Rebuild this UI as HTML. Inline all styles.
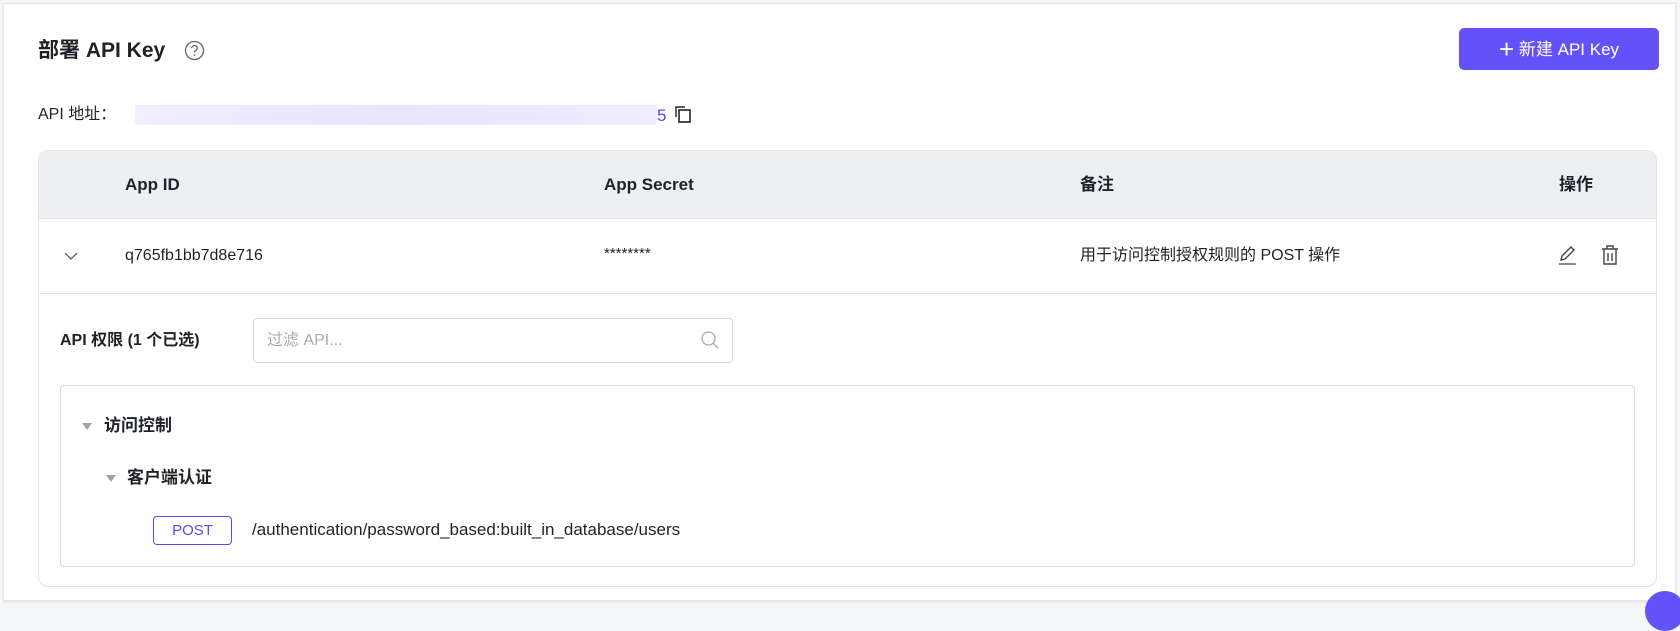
<!DOCTYPE html>
<html><head><meta charset="utf-8"><style>
*{box-sizing:border-box;margin:0;padding:0}
body{width:1680px;height:604px;background:#f5f6f8;font-family:"Liberation Sans","Noto Sans CJK SC",sans-serif;color:#1f2229;position:relative;overflow:hidden;line-height:20px}
.card{position:absolute;left:3px;top:3px;width:1673px;height:598px;background:#fff;border:1px solid #e4e5e8;box-shadow:0 1px 3px rgba(0,0,0,.08)}
.abs{position:absolute}
.title{left:34px;top:32px;font-size:21px;font-weight:bold;line-height:30px}
.btn{left:1455px;top:24px;width:200px;height:42px;background:#6352f8;border-radius:5px;color:#fff;font-size:17px;line-height:42px;text-align:center}
.tbl{left:34px;top:146px;width:1619px;height:437px;border:1px solid #e2e4e9;border-radius:10px;overflow:hidden}
.hd{position:absolute;left:0;top:0;width:100%;height:68px;background:#eeeff3;border-bottom:1px solid #e2e4e9}
.th{position:absolute;top:24px;font-size:17px;font-weight:bold;line-height:20px}
.td{position:absolute;font-size:16px;line-height:20px}
.row{position:absolute;left:0;top:68px;width:100%;height:75px;border-bottom:1px solid #e2e4e9}
</style></head><body>
<div class="card">
 <div class="abs title">部署 API Key</div>
 <svg class="abs" style="left:180px;top:36px" width="21" height="21" viewBox="0 0 21 21"><circle cx="10.5" cy="10.5" r="9" fill="none" stroke="#666" stroke-width="1.3"/><path d="M7.8 8.2a2.7 2.7 0 1 1 3.8 2.4c-.8.4-1.1.9-1.1 1.8" fill="none" stroke="#666" stroke-width="1.3"/><circle cx="10.5" cy="15" r=".9" fill="#666"/></svg>
 <div class="abs btn"><span style="font-size:26px;font-weight:200;vertical-align:-3px">+</span>&nbsp;新建 API Key</div>
 <div class="abs" style="left:34px;top:101px;font-size:16px">API 地址：</div>
 <div class="abs" style="left:131px;top:101px;width:522px;height:20px;background:linear-gradient(90deg,#f0eeff,#e8e5ff 50%,#efedff);"></div>
 <div class="abs" style="left:653px;top:102px;font-size:17px;color:#5a48f0">5</div>
 <svg class="abs" style="left:670px;top:101px" width="20" height="20" viewBox="0 0 20 20"><rect x="5" y="5" width="11" height="12" fill="none" stroke="#222" stroke-width="1.6"/><path d="M2 12V2h9" fill="none" stroke="#222" stroke-width="1.4"/></svg>
 <div class="abs tbl">
  <div class="hd">
   <div class="th" style="left:86px">App ID</div>
   <div class="th" style="left:565px">App Secret</div>
   <div class="th" style="left:1041px">备注</div>
   <div class="th" style="left:1520px">操作</div>
  </div>
  <div class="row">
   <svg class="abs" style="left:25px;top:32px" width="14" height="10"><path d="M1 2l6 6 6-6" fill="none" stroke="#555" stroke-width="1.2"/></svg>
   <div class="td" style="left:86px;top:27px">q765fb1bb7d8e716</div>
   <div class="td" style="left:565px;top:25px;font-size:15px">********</div>
   <div class="td" style="left:1041px;top:27px">用于访问控制授权规则的 POST 操作</div>
   <svg class="abs" style="left:1518px;top:25px" width="22" height="22" viewBox="0 0 22 22"><path d="M4 16l1-4 9-9 3 3-9 9z" fill="none" stroke="#444" stroke-width="1.4"/><path d="M2 20h17" stroke="#666" stroke-width="1.6"/></svg>
   <svg class="abs" style="left:1561px;top:25px" width="20" height="22" viewBox="0 0 20 22"><path d="M2 5h16M7 5V2h6v3M4 5v15h12V5M8 9v8M12 9v8" fill="none" stroke="#444" stroke-width="1.4"/></svg>
  </div>
  <div class="td" style="left:21px;top:180px;font-weight:bold">API 权限 (1 个已选)</div>
  <div class="abs" style="left:214px;top:167px;width:480px;height:45px;border:1px solid #d5d7de;border-radius:4px">
   <div class="abs" style="left:13px;top:12px;font-size:16px;color:#a8abb3">过滤 API...</div>
   <svg class="abs" style="left:446px;top:11px" width="20" height="20" viewBox="0 0 20 20"><circle cx="8.5" cy="8.5" r="6.5" fill="none" stroke="#aaa" stroke-width="1.3"/><path d="M13 13l5 5" stroke="#aaa" stroke-width="1.3"/></svg>
  </div>
  <div class="abs" style="left:21px;top:234px;width:1575px;height:182px;border:1px solid #d8dae0;border-radius:4px">
   <div class="abs" style="left:21px;top:37px;width:0;height:0;border-left:5px solid transparent;border-right:5px solid transparent;border-top:7px solid #a0a3aa"></div>
   <div class="abs" style="left:43px;top:30px;font-size:17px;font-weight:bold">访问控制</div>
   <div class="abs" style="left:45px;top:89px;width:0;height:0;border-left:5px solid transparent;border-right:5px solid transparent;border-top:7px solid #a0a3aa"></div>
   <div class="abs" style="left:66px;top:82px;font-size:17px;font-weight:bold">客户端认证</div>
   <div class="abs" style="left:92px;top:130px;width:79px;height:29px;border:1px solid #5a48f0;border-radius:4px;color:#5a48f0;font-size:15px;line-height:27px;text-align:center">POST</div>
   <div class="abs" style="left:191px;top:134px;font-size:17px">/authentication/password_based:built_in_database/users</div>
  </div>
 </div>
</div>
<div class="abs" style="left:1645px;top:591px;width:40px;height:40px;border-radius:50%;background:#6352f8"></div>
</body></html>
